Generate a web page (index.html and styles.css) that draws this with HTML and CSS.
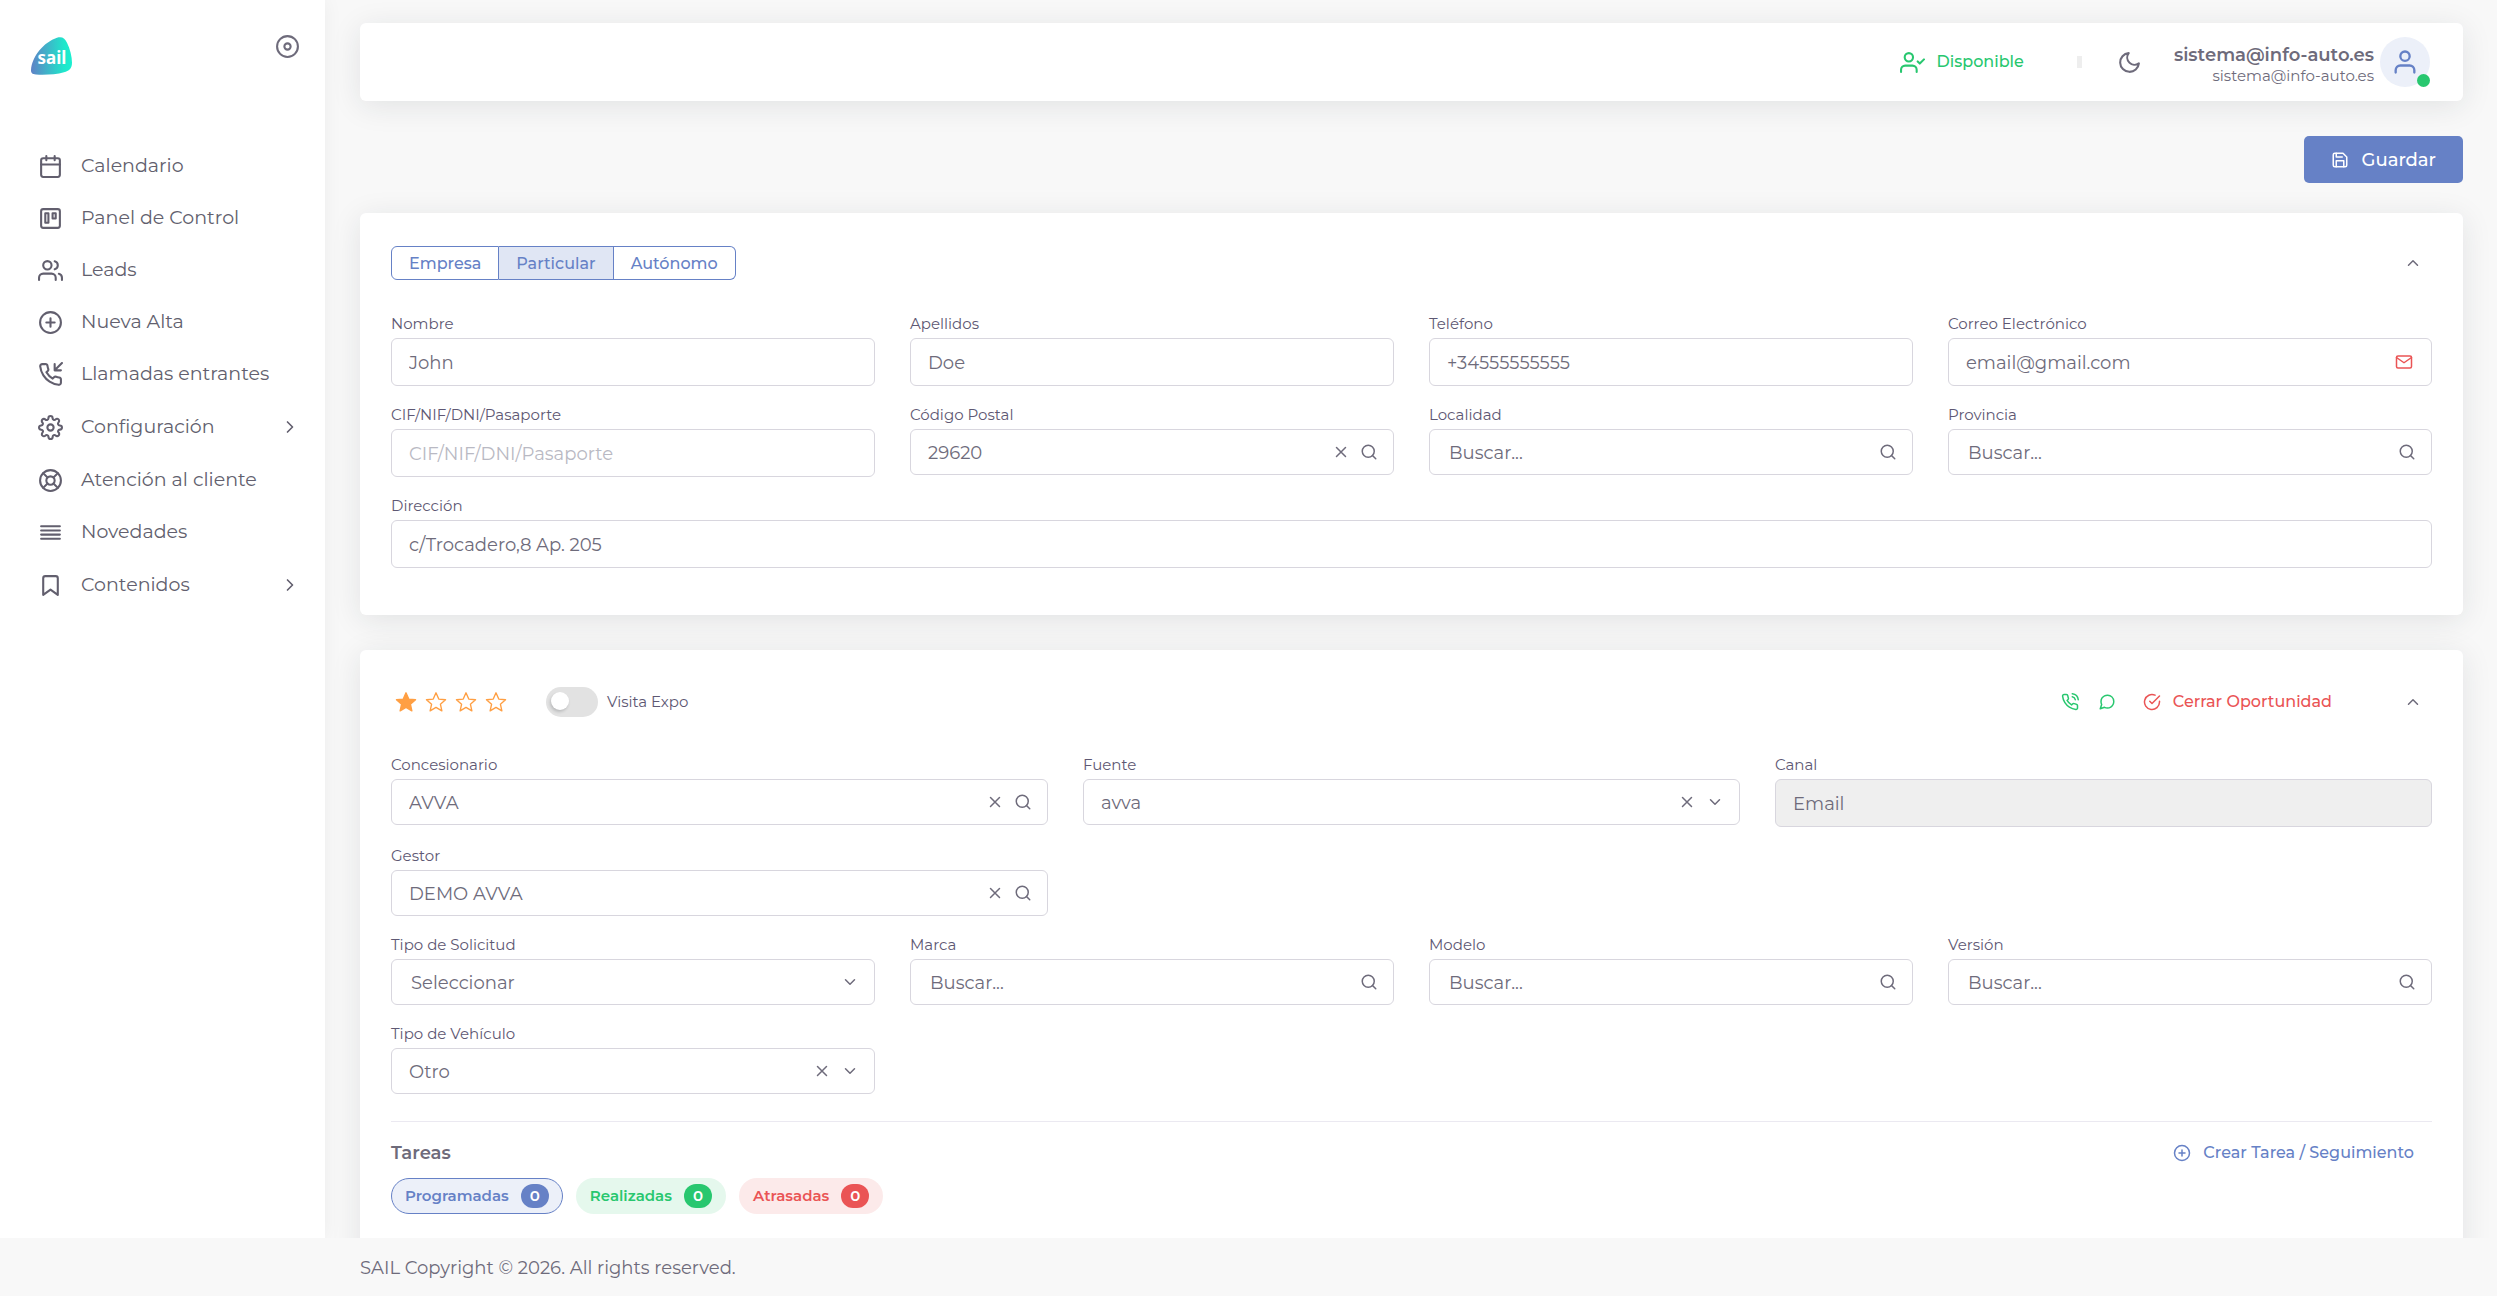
FILE: index.html
```html
<!DOCTYPE html>
<html lang="es">
<head>
    <meta charset="UTF-8">
    <meta name="viewport" content="width=device-width, initial-scale=1">
    <title>SAIL - Oportunidad</title>
    <link rel="stylesheet" href="styles.css">
</head>
<body>

<!-- icon sprite -->
<svg class="sprite" aria-hidden="true">
    <symbol id="i-disc" viewBox="0 0 24 24"><circle cx="12" cy="12" r="10"/><circle cx="12" cy="12" r="3"/></symbol>
    <symbol id="i-calendar" viewBox="0 0 24 24"><rect x="3" y="4" width="18" height="18" rx="2"/><path d="M16 2v4M8 2v4M3 10h18"/></symbol>
    <symbol id="i-trello" viewBox="0 0 24 24"><rect x="3" y="3" width="18" height="18" rx="2"/><rect x="7" y="7" width="3" height="9"/><rect x="14" y="7" width="3" height="5"/></symbol>
    <symbol id="i-users" viewBox="0 0 24 24"><path d="M17 21v-2a4 4 0 0 0-4-4H5a4 4 0 0 0-4 4v2"/><circle cx="9" cy="7" r="4"/><path d="M23 21v-2a4 4 0 0 0-3-3.87M16 3.13a4 4 0 0 1 0 7.75"/></symbol>
    <symbol id="i-plus-circle" viewBox="0 0 24 24"><circle cx="12" cy="12" r="10"/><path d="M12 8v8M8 12h8"/></symbol>
    <symbol id="i-phone-incoming" viewBox="0 0 24 24"><path d="M16 2v6h6M23 1l-7 7M22 16.92v3a2 2 0 0 1-2.18 2 19.79 19.79 0 0 1-8.63-3.07 19.5 19.5 0 0 1-6-6 19.79 19.79 0 0 1-3.07-8.67A2 2 0 0 1 4.11 2h3a2 2 0 0 1 2 1.72 12.84 12.84 0 0 0 .7 2.81 2 2 0 0 1-.45 2.11L8.09 9.91a16 16 0 0 0 6 6l1.27-1.27a2 2 0 0 1 2.11-.45 12.84 12.84 0 0 0 2.81.7A2 2 0 0 1 22 16.92z"/></symbol>
    <symbol id="i-phone-call" viewBox="0 0 24 24"><path d="M15.05 5A5 5 0 0 1 19 8.95M15.05 1A9 9 0 0 1 23 8.94M22 16.92v3a2 2 0 0 1-2.18 2 19.79 19.79 0 0 1-8.63-3.07 19.5 19.5 0 0 1-6-6 19.79 19.79 0 0 1-3.07-8.67A2 2 0 0 1 4.11 2h3a2 2 0 0 1 2 1.72 12.84 12.84 0 0 0 .7 2.81 2 2 0 0 1-.45 2.11L8.09 9.91a16 16 0 0 0 6 6l1.27-1.27a2 2 0 0 1 2.11-.45 12.84 12.84 0 0 0 2.81.7A2 2 0 0 1 22 16.92z"/></symbol>
    <symbol id="i-settings" viewBox="0 0 24 24"><circle cx="12" cy="12" r="3"/><path d="M19.4 15a1.65 1.65 0 0 0 .33 1.82l.06.06a2 2 0 0 1 0 2.83 2 2 0 0 1-2.83 0l-.06-.06a1.65 1.65 0 0 0-1.82-.33 1.65 1.65 0 0 0-1 1.51V21a2 2 0 0 1-2 2 2 2 0 0 1-2-2v-.09A1.65 1.65 0 0 0 9 19.4a1.65 1.65 0 0 0-1.82.33l-.06.06a2 2 0 0 1-2.83 0 2 2 0 0 1 0-2.83l.06-.06a1.65 1.65 0 0 0 .33-1.82 1.65 1.65 0 0 0-1.51-1H3a2 2 0 0 1-2-2 2 2 0 0 1 2-2h.09A1.65 1.65 0 0 0 4.6 9a1.65 1.65 0 0 0-.33-1.82l-.06-.06a2 2 0 0 1 0-2.83 2 2 0 0 1 2.83 0l.06.06a1.65 1.65 0 0 0 1.82.33H9a1.65 1.65 0 0 0 1-1.51V3a2 2 0 0 1 2-2 2 2 0 0 1 2 2v.09a1.65 1.65 0 0 0 1 1.51 1.65 1.65 0 0 0 1.82-.33l.06-.06a2 2 0 0 1 2.83 0 2 2 0 0 1 0 2.83l-.06.06a1.65 1.65 0 0 0-.33 1.82V9a1.65 1.65 0 0 0 1.51 1H21a2 2 0 0 1 2 2 2 2 0 0 1-2 2h-.09a1.65 1.65 0 0 0-1.51 1z"/></symbol>
    <symbol id="i-life-buoy" viewBox="0 0 24 24"><circle cx="12" cy="12" r="10"/><circle cx="12" cy="12" r="4"/><path d="M4.93 4.93l4.24 4.24M14.83 14.83l4.24 4.24M14.83 9.17l4.24-4.24M4.93 19.07l4.24-4.24"/></symbol>
    <symbol id="i-align" viewBox="0 0 24 24"><path d="M21 10H3M21 6H3M21 14H3M21 18H3"/></symbol>
    <symbol id="i-bookmark" viewBox="0 0 24 24"><path d="M19 21l-7-5-7 5V5a2 2 0 0 1 2-2h10a2 2 0 0 1 2 2z"/></symbol>
    <symbol id="i-right" viewBox="0 0 24 24"><path d="M9 18l6-6-6-6"/></symbol>
    <symbol id="i-up" viewBox="0 0 24 24"><path d="M18 15l-6-6-6 6"/></symbol>
    <symbol id="i-down" viewBox="0 0 24 24"><path d="M6 9l6 6 6-6"/></symbol>
    <symbol id="i-x" viewBox="0 0 24 24"><path d="M18 6L6 18M6 6l12 12"/></symbol>
    <symbol id="i-search" viewBox="0 0 24 24"><circle cx="11" cy="11" r="8"/><path d="M21 21l-4.35-4.35"/></symbol>
    <symbol id="i-user" viewBox="0 0 24 24"><path d="M20 21v-2a4 4 0 0 0-4-4H8a4 4 0 0 0-4 4v2"/><circle cx="12" cy="7" r="4"/></symbol>
    <symbol id="i-user-check" viewBox="0 0 24 24"><path d="M16 21v-2a4 4 0 0 0-4-4H5a4 4 0 0 0-4 4v2"/><circle cx="8.5" cy="7" r="4"/><path d="M17 11l2 2 4-4"/></symbol>
    <symbol id="i-moon" viewBox="0 0 24 24"><path d="M21 12.79A9 9 0 1 1 11.21 3 7 7 0 0 0 21 12.79z"/></symbol>
    <symbol id="i-save" viewBox="0 0 24 24"><path d="M19 21H5a2 2 0 0 1-2-2V5a2 2 0 0 1 2-2h11l5 5v11a2 2 0 0 1-2 2z"/><path d="M17 21v-8H7v8M7 3v5h8"/></symbol>
    <symbol id="i-mail" viewBox="0 0 24 24"><rect x="2" y="4" width="20" height="16" rx="2"/><path d="M22 6l-10 7L2 6"/></symbol>
    <symbol id="i-chat" viewBox="0 0 24 24"><path d="M21 11.5a8.38 8.38 0 0 1-.9 3.8 8.5 8.5 0 0 1-7.6 4.7 8.38 8.38 0 0 1-3.8-.9L3 21l1.9-5.7a8.38 8.38 0 0 1-.9-3.8 8.5 8.5 0 0 1 4.7-7.6 8.38 8.38 0 0 1 3.8-.9h.5a8.48 8.48 0 0 1 8 8v.5z"/></symbol>
    <symbol id="i-check-circle" viewBox="0 0 24 24"><path d="M22 11.08V12a10 10 0 1 1-5.93-9.14"/><path d="M22 4L12 14.01l-3-3"/></symbol>
    <symbol id="i-star" viewBox="0 0 24 24"><path d="M12 2l3 6.800 7.400.7-5.600 4.900 1.600 7.200L12 17.900l-6.400 3.700 1.600-7.200-5.600-4.900 7.400-.7z"/></symbol>
</svg>

<div class="app">
    <aside class="sidebar">
        <div class="brand">
            <a href="#" class="logo" aria-label="SAIL">
                <svg viewBox="0 0 42 38">
                    <defs>
                        <linearGradient id="sail" x1="0" y1="0" x2="1" y2="0">
                            <stop offset="0" stop-color="#5f82c6"/>
                            <stop offset="0.8" stop-color="#1fe6cb"/>
                            <stop offset="1" stop-color="#1cf0d0"/>
                        </linearGradient>
                    </defs>
                    <path fill="url(#sail)" d="M0 33C1 19 13 5 26 .7c5-1.500 8 .5 10 5 3 6 5 14 5 20 0 6-3 8-8 9.500C25 37.500 14 38 5 37.500 1 37 0 36 0 33z"/>
                    <text x="21" y="27" text-anchor="middle">sail</text>
                </svg>
            </a>
            <button type="button" class="icon-btn" aria-label="Fijar menú"><svg class="icon icon-lg"><use href="#i-disc"/></svg></button>
        </div>
        <nav class="menu">
            <a href="#"><svg class="icon icon-lg"><use href="#i-calendar"/></svg><span>Calendario</span></a>
            <a href="#"><svg class="icon icon-lg"><use href="#i-trello"/></svg><span>Panel de Control</span></a>
            <a href="#"><svg class="icon icon-lg"><use href="#i-users"/></svg><span>Leads</span></a>
            <a href="#"><svg class="icon icon-lg"><use href="#i-plus-circle"/></svg><span>Nueva Alta</span></a>
            <a href="#"><svg class="icon icon-lg"><use href="#i-phone-incoming"/></svg><span>Llamadas entrantes</span></a>
            <a href="#" class="has-sub"><svg class="icon icon-lg"><use href="#i-settings"/></svg><span>Configuración</span><svg class="icon"><use href="#i-right"/></svg></a>
            <a href="#"><svg class="icon icon-lg"><use href="#i-life-buoy"/></svg><span>Atención al cliente</span></a>
            <a href="#"><svg class="icon icon-lg"><use href="#i-align"/></svg><span>Novedades</span></a>
            <a href="#" class="has-sub"><svg class="icon icon-lg"><use href="#i-bookmark"/></svg><span>Contenidos</span><svg class="icon"><use href="#i-right"/></svg></a>
        </nav>
    </aside>

    <main class="content">
        <header class="navbar">
            <button type="button" class="status"><svg class="icon icon-lg"><use href="#i-user-check"/></svg>Disponible</button>
            <span class="separator"></span>
            <button type="button" class="icon-btn" aria-label="Modo oscuro"><svg class="icon icon-lg"><use href="#i-moon"/></svg></button>
            <a href="#" class="user">
                <span class="user-info">
                    <strong>sistema@info-auto.es</strong>
                    <small>sistema@info-auto.es</small>
                </span>
                <span class="avatar"><svg class="icon"><use href="#i-user"/></svg><i class="online"></i></span>
            </a>
        </header>

        <div class="actions">
            <button type="submit" class="btn-primary" form="clientForm"><svg class="icon icon-sm"><use href="#i-save"/></svg>Guardar</button>
        </div>

        <form class="card client-card" id="clientForm">
            <div class="card-head">
                <div class="btn-group">
                    <button type="button">Empresa</button>
                    <button type="button" class="active">Particular</button>
                    <button type="button">Autónomo</button>
                </div>
                <button type="button" class="icon-btn collapse" aria-label="Contraer"><svg class="icon icon-sm"><use href="#i-up"/></svg></button>
            </div>
            <div class="row cols-4">
                <div class="field">
                    <label for="nombre">Nombre</label>
                    <div class="control"><input type="text" id="nombre" value="John"></div>
                </div>
                <div class="field">
                    <label for="apellidos">Apellidos</label>
                    <div class="control"><input type="text" id="apellidos" value="Doe"></div>
                </div>
                <div class="field">
                    <label for="telefono">Teléfono</label>
                    <div class="control"><input type="tel" id="telefono" value="+34555555555"></div>
                </div>
                <div class="field">
                    <label for="email">Correo Electrónico</label>
                    <div class="control">
                        <input type="email" id="email" value="email@gmail.com">
                        <svg class="icon icon-sm danger"><use href="#i-mail"/></svg>
                    </div>
                </div>
            </div>
            <div class="row cols-4">
                <div class="field">
                    <label for="cif">CIF/NIF/DNI/Pasaporte</label>
                    <div class="control"><input type="text" id="cif" placeholder="CIF/NIF/DNI/Pasaporte"></div>
                </div>
                <div class="field">
                    <label for="cp">Código Postal</label>
                    <div class="control picker">
                        <input type="text" id="cp" value="29620">
                        <button type="button" class="icon-btn" aria-label="Borrar"><svg class="icon icon-sm"><use href="#i-x"/></svg></button>
                        <svg class="icon icon-sm"><use href="#i-search"/></svg>
                    </div>
                </div>
                <div class="field">
                    <label for="localidad">Localidad</label>
                    <div class="control picker">
                        <input type="text" id="localidad" class="search" placeholder="Buscar...">
                        <svg class="icon icon-sm"><use href="#i-search"/></svg>
                    </div>
                </div>
                <div class="field">
                    <label for="provincia">Provincia</label>
                    <div class="control picker">
                        <input type="text" id="provincia" class="search" placeholder="Buscar...">
                        <svg class="icon icon-sm"><use href="#i-search"/></svg>
                    </div>
                </div>
            </div>
            <div class="row">
                <div class="field">
                    <label for="direccion">Dirección</label>
                    <div class="control"><input type="text" id="direccion" value="c/Trocadero,8 Ap. 205"></div>
                </div>
            </div>
        </form>

        <section class="card">
            <div class="card-head lead-head">
                <div class="stars">
                    <button type="button" class="icon-btn on" aria-label="1 estrella"><svg class="icon"><use href="#i-star"/></svg></button>
                    <button type="button" class="icon-btn" aria-label="2 estrellas"><svg class="icon"><use href="#i-star"/></svg></button>
                    <button type="button" class="icon-btn" aria-label="3 estrellas"><svg class="icon"><use href="#i-star"/></svg></button>
                    <button type="button" class="icon-btn" aria-label="4 estrellas"><svg class="icon"><use href="#i-star"/></svg></button>
                </div>
                <label class="switch"><input type="checkbox">Visita Expo</label>
                <div class="contact">
                    <button type="button" class="icon-btn" aria-label="Llamar"><svg class="icon icon-sm"><use href="#i-phone-call"/></svg></button>
                    <button type="button" class="icon-btn" aria-label="Mensaje"><svg class="icon icon-sm"><use href="#i-chat"/></svg></button>
                </div>
                <button type="button" class="btn-flat danger"><svg class="icon icon-sm"><use href="#i-check-circle"/></svg>Cerrar Oportunidad</button>
                <button type="button" class="icon-btn collapse" aria-label="Contraer"><svg class="icon icon-sm"><use href="#i-up"/></svg></button>
            </div>
            <div class="row cols-3">
                <div class="field">
                    <label for="concesionario">Concesionario</label>
                    <div class="control picker">
                        <input type="text" id="concesionario" value="AVVA">
                        <button type="button" class="icon-btn" aria-label="Borrar"><svg class="icon icon-sm"><use href="#i-x"/></svg></button>
                        <svg class="icon icon-sm"><use href="#i-search"/></svg>
                    </div>
                </div>
                <div class="field">
                    <label for="fuente">Fuente</label>
                    <div class="control picker">
                        <select id="fuente"><option>avva</option></select>
                        <button type="button" class="icon-btn" aria-label="Borrar"><svg class="icon icon-sm"><use href="#i-x"/></svg></button>
                        <svg class="icon icon-sm"><use href="#i-down"/></svg>
                    </div>
                </div>
                <div class="field">
                    <label for="canal">Canal</label>
                    <div class="control disabled"><input type="text" id="canal" value="Email" disabled></div>
                </div>
            </div>
            <div class="row cols-3">
                <div class="field">
                    <label for="gestor">Gestor</label>
                    <div class="control picker">
                        <input type="text" id="gestor" value="DEMO AVVA">
                        <button type="button" class="icon-btn" aria-label="Borrar"><svg class="icon icon-sm"><use href="#i-x"/></svg></button>
                        <svg class="icon icon-sm"><use href="#i-search"/></svg>
                    </div>
                </div>
            </div>
            <div class="row cols-4">
                <div class="field">
                    <label for="solicitud">Tipo de Solicitud</label>
                    <div class="control picker">
                        <select id="solicitud" class="search"><option>Seleccionar</option></select>
                        <svg class="icon icon-sm"><use href="#i-down"/></svg>
                    </div>
                </div>
                <div class="field">
                    <label for="marca">Marca</label>
                    <div class="control picker">
                        <input type="text" id="marca" class="search" placeholder="Buscar...">
                        <svg class="icon icon-sm"><use href="#i-search"/></svg>
                    </div>
                </div>
                <div class="field">
                    <label for="modelo">Modelo</label>
                    <div class="control picker">
                        <input type="text" id="modelo" class="search" placeholder="Buscar...">
                        <svg class="icon icon-sm"><use href="#i-search"/></svg>
                    </div>
                </div>
                <div class="field">
                    <label for="version">Versión</label>
                    <div class="control picker">
                        <input type="text" id="version" class="search" placeholder="Buscar...">
                        <svg class="icon icon-sm"><use href="#i-search"/></svg>
                    </div>
                </div>
            </div>
            <div class="row cols-4">
                <div class="field">
                    <label for="vehiculo">Tipo de Vehículo</label>
                    <div class="control picker">
                        <select id="vehiculo"><option>Otro</option></select>
                        <button type="button" class="icon-btn" aria-label="Borrar"><svg class="icon icon-sm"><use href="#i-x"/></svg></button>
                        <svg class="icon icon-sm"><use href="#i-down"/></svg>
                    </div>
                </div>
            </div>

            <div class="tasks">
                <div class="tasks-head">
                    <h2>Tareas</h2>
                    <button type="button" class="btn-flat"><svg class="icon icon-sm"><use href="#i-plus-circle"/></svg>Crear Tarea / Seguimiento</button>
                </div>
                <div class="pills">
                    <button type="button" class="pill blue active">Programadas <span>0</span></button>
                    <button type="button" class="pill green">Realizadas <span>0</span></button>
                    <button type="button" class="pill red">Atrasadas <span>0</span></button>
                </div>
            </div>
        </section>
    </main>
</div>

<footer class="footer">SAIL Copyright © 2026. All rights reserved.</footer>

</body>
</html>
```
FILE: styles.css
```css
* {
    box-sizing: border-box;
}

body {
    margin: 0;
    height: 100vh;
    display: flex;
    flex-direction: column;
    overflow: hidden;
    background: #f8f8f8;
    color: #6e6b7b;
    font-family: Montserrat, Inter, "Noto Sans", sans-serif;
    font-size: 18px;
    line-height: 24px;
}

button, input, select {
    font: inherit;
    color: inherit;
}

button {
    display: inline-flex;
    align-items: center;
    border: none;
    background: none;
    padding: 0;
    cursor: pointer;
}

a {
    color: inherit;
    text-decoration: none;
}

.sprite {
    display: none;
}

.icon {
    width: 20px;
    height: 20px;
    flex: none;
    fill: none;
    stroke: currentColor;
    stroke-width: 2;
    stroke-linecap: round;
    stroke-linejoin: round;
}

.icon-lg {
    width: 25px;
    height: 25px;
}

.icon-sm {
    width: 18px;
    height: 18px;
}

.app {
    flex: 1;
    min-height: 0;
    display: flex;
    overflow: hidden;
}

/* sidebar */
.sidebar {
    width: 325px;
    flex: none;
    background: white;
    box-shadow: 0 0 19px rgba(34, 41, 47, 0.05);
}

.brand {
    display: flex;
    justify-content: space-between;
    align-items: flex-start;
    padding: 34px 25px 0 31px;
    height: 140px;
}

.logo svg {
    display: block;
    width: 42px;
    height: 38px;
    margin-top: 3px;
}

.logo text {
    fill: white;
    font-family: "Noto Sans", sans-serif;
    font-size: 17px;
    font-weight: 700;
}

.menu {
    display: flex;
    flex-direction: column;
    color: #625f6e;
    font-size: 19px;
}

.menu a {
    display: flex;
    align-items: center;
    gap: 18px;
    height: 52px;
    padding: 0 25px 0 38px;
}

.menu a.has-sub {
    height: 54px;
}

.menu span {
    flex: 1;
}

/* content */
.content {
    flex: 1;
    min-width: 0;
    padding: 23px 34px 0 35px;
}

.navbar {
    display: flex;
    align-items: center;
    justify-content: flex-end;
    height: 78px;
    padding: 0 33px;
    background: white;
    border-radius: 6px;
    box-shadow: 0 5px 30px rgba(34, 41, 47, 0.1);
}

.status {
    gap: 12px;
    color: #28c76f;
    font-size: 16px;
    font-weight: 500;
}

.separator {
    width: 5px;
    height: 12px;
    margin: 0 35px 0 53px;
    background: #eee;
}

.user {
    display: flex;
    align-items: center;
    gap: 6px;
    margin-left: 32px;
}

.user-info {
    display: flex;
    flex-direction: column;
    align-items: flex-end;
    padding-top: 5px;
}

.user-info strong {
    font-weight: 600;
    line-height: 22px;
}

.user-info small {
    font-size: 15px;
    line-height: 20px;
}

.avatar {
    position: relative;
    display: flex;
    align-items: center;
    justify-content: center;
    width: 50px;
    height: 50px;
    border-radius: 50%;
    background: #ecf0f9;
    color: #6681c6;
}

.avatar .icon {
    width: 28px;
    height: 28px;
}

.online {
    position: absolute;
    right: 0;
    bottom: 0;
    width: 13px;
    height: 13px;
    border-radius: 50%;
    background: #28c76f;
}

.actions {
    display: flex;
    justify-content: flex-end;
    margin: 35px 0 30px;
}

.btn-primary {
    gap: 13px;
    height: 47px;
    padding: 0 27px;
    border-radius: 5px;
    background: #6681c6;
    color: white;
    font-weight: 500;
}

.card {
    padding: 33px 31px 48px;
    margin-bottom: 35px;
    background: white;
    border-radius: 6px;
    box-shadow: 0 5px 30px rgba(34, 41, 47, 0.1);
}

.card-head {
    display: flex;
    align-items: center;
    height: 34px;
    margin-bottom: 34px;
}

.lead-head {
    height: 38px;
}

.client-card {
    padding-bottom: 28px;
}

.btn-group {
    display: flex;
}

.btn-group button {
    height: 34px;
    padding: 2px 17px 0;
    border: 1px solid #6681c6;
    color: #6681c6;
    font-size: 16px;
    font-weight: 500;
}

.btn-group button + button {
    border-left: none;
}

.btn-group button:first-child {
    border-radius: 6px 0 0 6px;
}

.btn-group button:last-child {
    border-radius: 0 6px 6px 0;
}

.btn-group .active {
    background: #e0e6f4;
}

.collapse {
    margin-left: auto;
    margin-right: 10px;
}

/* form */
.row {
    display: grid;
    gap: 35px;
    margin-bottom: 19px;
}

.cols-3 {
    grid-template-columns: repeat(3, 1fr);
}

.cols-4 {
    grid-template-columns: repeat(4, 1fr);
}

.field label {
    display: block;
    margin-bottom: 4px;
    color: #5e5873;
    font-size: 15px;
    line-height: 20px;
}

.control {
    display: flex;
    align-items: center;
    gap: 10px;
    height: 48px;
    padding-right: 18px;
    border: 1px solid #d8d6de;
    border-radius: 6px;
    background: white;
}

.control input, .control select {
    flex: 1;
    min-width: 0;
    height: 100%;
    padding: 2px 0 0 17px;
    border: none;
    outline: none;
    background: none;
    appearance: none;
}

.control input::placeholder {
    color: #b9b9c3;
    opacity: 1;
}

.picker {
    height: 46px;
    padding-right: 15px;
}

.picker input::placeholder {
    color: #6e6b7b;
}

.control .search {
    padding-left: 19px;
}

.disabled {
    background: #efefef;
}

.danger {
    color: #ea5455;
}

/* opportunity header */
.stars {
    display: flex;
    gap: 8px;
    padding-left: 4px;
    color: #ff9f43;
}

.stars .icon {
    width: 22px;
    height: 22px;
    stroke-width: 1.5;
}

.stars .on .icon {
    fill: currentColor;
}

.switch {
    display: flex;
    align-items: center;
    gap: 9px;
    margin-left: 39px;
    color: #5e5873;
    font-size: 15px;
}

.switch input {
    appearance: none;
    width: 52px;
    height: 30px;
    margin: 0;
    padding: 5px;
    border-radius: 15px;
    background: #e2e2e2;
}

.switch input::before {
    content: "";
    display: block;
    width: 18px;
    height: 18px;
    border-radius: 50%;
    background: white;
    box-shadow: -1px 2px 3px rgba(34, 41, 47, 0.2);
}

.switch input:checked::before {
    margin-left: auto;
}

.contact {
    display: flex;
    gap: 19px;
    margin-left: auto;
    color: #28c76f;
}

.btn-flat {
    gap: 12px;
    font-size: 16px;
    font-weight: 500;
}

.card-head .btn-flat {
    margin-left: 27px;
}

.btn-flat + .collapse {
    margin-left: 72px;
}

/* tasks */
.tasks {
    margin-top: 27px;
    border-top: 1px solid #ebe9f1;
    color: #6681c6;
}

.tasks-head {
    display: flex;
    align-items: center;
    justify-content: space-between;
    padding: 19px 18px 13px 0;
}

.tasks h2 {
    margin: 0;
    color: #6e6b7b;
    font-size: 18px;
    font-weight: 600;
}

.pills {
    display: flex;
    gap: 13px;
}

.pill {
    gap: 12px;
    height: 36px;
    padding: 0 13px;
    border: 1px solid transparent;
    border-radius: 18px;
    font-size: 15px;
    font-weight: 600;
}

.pill span {
    padding: 0 9px;
    border-radius: 12px;
    color: white;
    font-size: 15px;
}

.blue {
    background: #ecf0f9;
}

.blue.active {
    border-color: #6681c6;
}

.blue span {
    background: #6681c6;
}

.green {
    background: #e5f8ed;
    color: #28c76f;
}

.green span {
    background: #28c76f;
}

.red {
    background: #fceaea;
    color: #ea5455;
}

.red span {
    background: #ea5455;
}

.footer {
    flex: none;
    height: 58px;
    padding: 18px 360px;
    background: #f8f8f8;
}
```
